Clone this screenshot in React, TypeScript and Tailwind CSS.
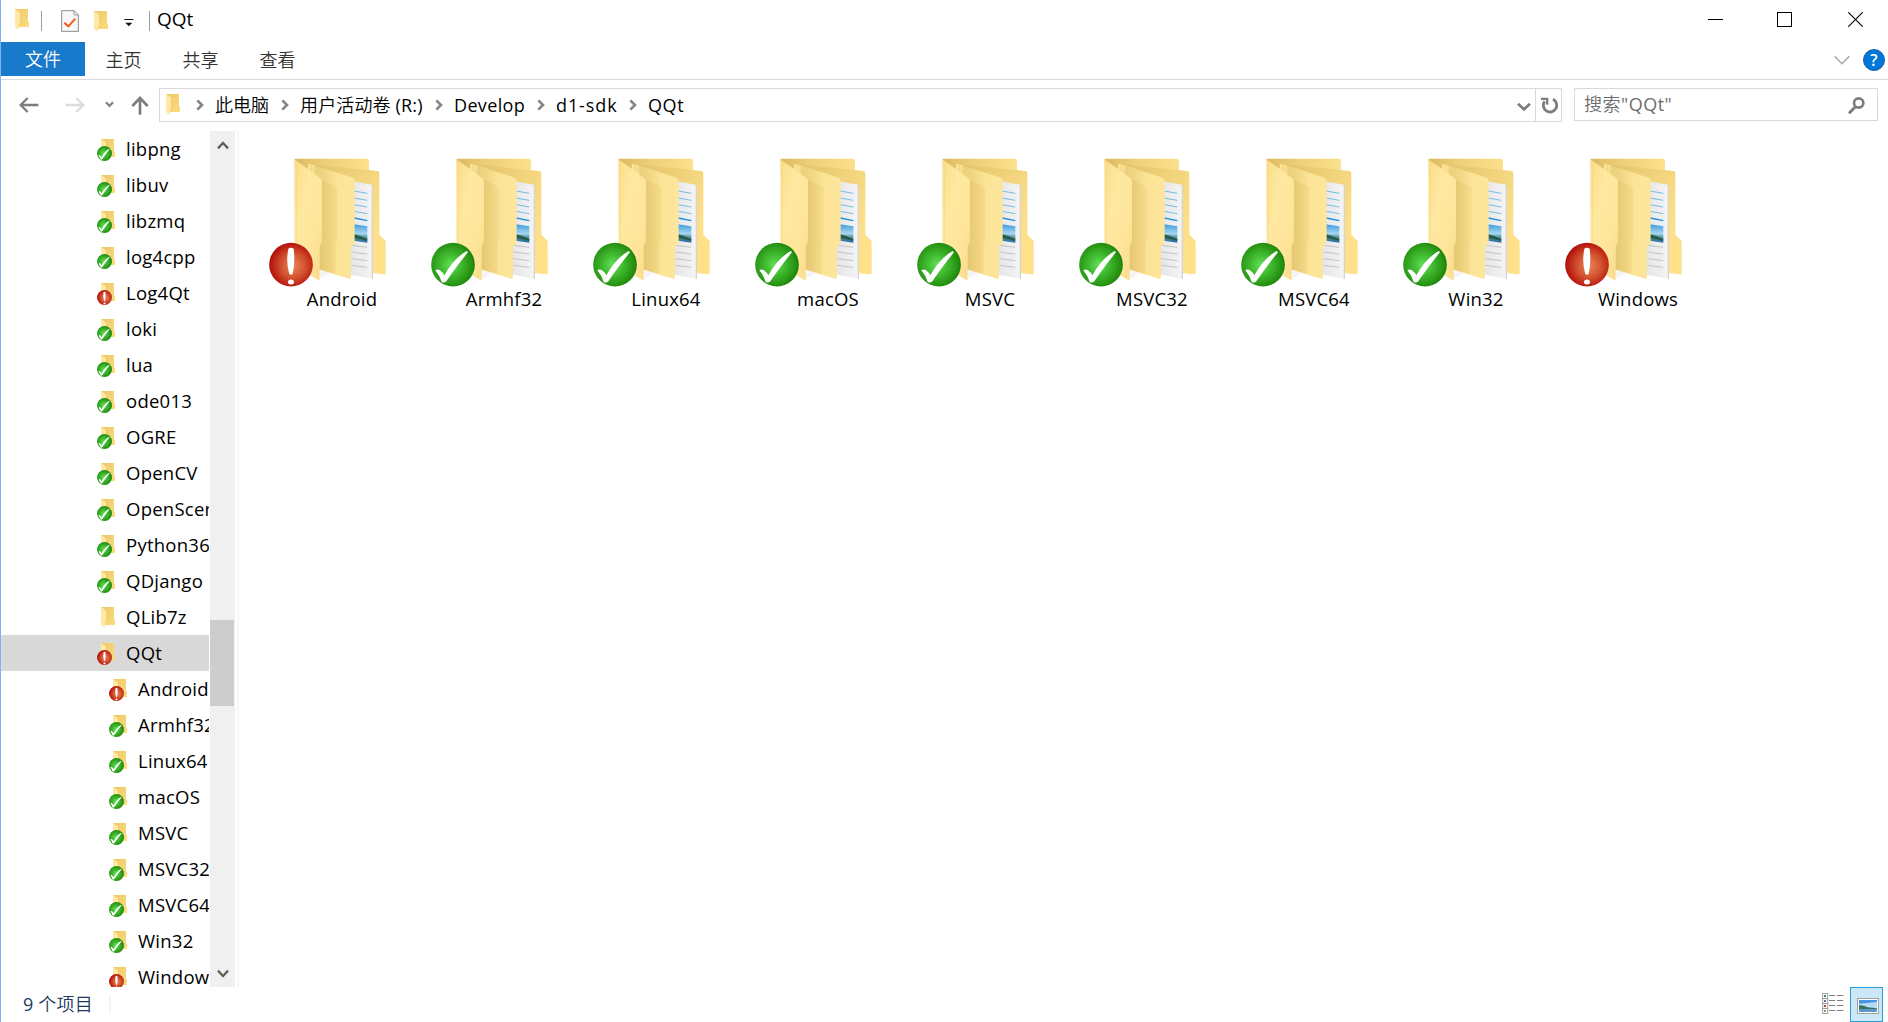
import React from 'react';

type Status = 'ok' | 'err' | 'none';

const tree: { name: string; status: Status; child?: boolean }[] = [
  { name: 'libpng', status: 'ok' },
  { name: 'libuv', status: 'ok' },
  { name: 'libzmq', status: 'ok' },
  { name: 'log4cpp', status: 'ok' },
  { name: 'Log4Qt', status: 'err' },
  { name: 'loki', status: 'ok' },
  { name: 'lua', status: 'ok' },
  { name: 'ode013', status: 'ok' },
  { name: 'OGRE', status: 'ok' },
  { name: 'OpenCV', status: 'ok' },
  { name: 'OpenScen', status: 'ok' },
  { name: 'Python36', status: 'ok' },
  { name: 'QDjango', status: 'ok' },
  { name: 'QLib7z', status: 'none' },
  { name: 'QQt', status: 'err' },
  { name: 'Android', status: 'err', child: true },
  { name: 'Armhf32', status: 'ok', child: true },
  { name: 'Linux64', status: 'ok', child: true },
  { name: 'macOS', status: 'ok', child: true },
  { name: 'MSVC', status: 'ok', child: true },
  { name: 'MSVC32', status: 'ok', child: true },
  { name: 'MSVC64', status: 'ok', child: true },
  { name: 'Win32', status: 'ok', child: true },
  { name: 'Window', status: 'err', child: true },
];

const folders: { name: string; status: Status }[] = [
  { name: 'Android', status: 'err' },
  { name: 'Armhf32', status: 'ok' },
  { name: 'Linux64', status: 'ok' },
  { name: 'macOS', status: 'ok' },
  { name: 'MSVC', status: 'ok' },
  { name: 'MSVC32', status: 'ok' },
  { name: 'MSVC64', status: 'ok' },
  { name: 'Win32', status: 'ok' },
  { name: 'Windows', status: 'err' },
];

function Gradients() {
  return (
    <svg className="absolute size-0" aria-hidden="true">
      <defs>
        <radialGradient id="green" cx="0.45" cy="0.5" r="0.55">
          <stop offset="0" stopColor="#62e058" />
          <stop offset="0.45" stopColor="#3fb82e" />
          <stop offset="0.9" stopColor="#248f10" />
          <stop offset="1" stopColor="#1a7c08" />
        </radialGradient>
        <radialGradient id="red" cx="0.55" cy="0.52" r="0.55">
          <stop offset="0" stopColor="#e8845a" />
          <stop offset="0.5" stopColor="#d2532f" />
          <stop offset="0.88" stopColor="#bb1c12" />
          <stop offset="1" stopColor="#a8120c" />
        </radialGradient>
        <linearGradient id="front" x1="0" y1="0" x2="1" y2="1">
          <stop offset="0" stopColor="#fadd88" />
          <stop offset="0.35" stopColor="#ffe8a0" />
          <stop offset="0.7" stopColor="#fee59a" />
          <stop offset="1" stopColor="#f8db88" />
        </linearGradient>
        <linearGradient id="middle" x1="0" y1="0" x2="1" y2="0">
          <stop offset="0" stopColor="#e6ca76" />
          <stop offset="0.3" stopColor="#eed380" />
          <stop offset="0.5" stopColor="#f6dc8c" />
          <stop offset="0.62" stopColor="#fce496" />
          <stop offset="1" stopColor="#fde59c" />
        </linearGradient>
        <linearGradient id="shade" x1="0" y1="0" x2="1" y2="0">
          <stop offset="0" stopColor="#c9a548" stopOpacity="0.22" />
          <stop offset="1" stopColor="#d9b659" stopOpacity="0.16" />
        </linearGradient>
        <linearGradient id="backTop" x1="0" y1="0" x2="1" y2="0.2">
          <stop offset="0" stopColor="#dcb860" />
          <stop offset="0.4" stopColor="#ebce78" />
          <stop offset="1" stopColor="#fde08a" />
        </linearGradient>
        <linearGradient id="backRight" x1="0" y1="0" x2="1" y2="0.8">
          <stop offset="0" stopColor="#e2c268" />
          <stop offset="0.5" stopColor="#f1d47c" />
          <stop offset="0.8" stopColor="#fcdf88" />
          <stop offset="1" stopColor="#ffe18a" />
        </linearGradient>
        <linearGradient id="paper" x1="0" y1="0" x2="1" y2="0">
          <stop offset="0" stopColor="#e3e3e5" />
          <stop offset="1" stopColor="#f5f5f6" />
        </linearGradient>
        <linearGradient id="sky" x1="0" y1="0" x2="0" y2="1">
          <stop offset="0" stopColor="#3f9fe0" />
          <stop offset="0.5" stopColor="#a6d4f0" />
          <stop offset="0.75" stopColor="#3f8a9a" />
          <stop offset="1" stopColor="#2a6ca8" />
        </linearGradient>
        <linearGradient id="smallBack" x1="0" y1="0" x2="1" y2="1">
          <stop offset="0" stopColor="#edc866" />
          <stop offset="1" stopColor="#fbdc80" />
        </linearGradient>
      </defs>
    </svg>
  );
}

/* Badge drawn on a 132-unit square */
function Badge({ status }: { status: Status }) {
  if (status === 'ok') {
    return (
      <g>
        <circle cx="66" cy="66" r="65.5" fill="url(#green)" />
        <path d="M13 83Q19 78 26 82Q36 89 40 98Q68 47 107 25L111 29Q80 66 46 116Q40 122 32 118Q26 98 13 83Z" fill="#fff" />
      </g>
    );
  }
  return (
    <g>
      <circle cx="66" cy="66" r="65.5" fill="url(#red)" />
      <path d="M58 18Q66 12 74 18Q79 58 71 94Q66 98 61 94Q50 58 58 18Z" fill="#fff" />
      <ellipse cx="66" cy="118" rx="9" ry="7.5" fill="#fff" />
    </g>
  );
}

function LargeFolder({ status }: { status: Status }) {
  return (
    <svg viewBox="54 48 360 396" className="block h-[132px] w-[120px] shrink-0">
      <path d="M133 60Q133 56 138 56H352Q357 58 357 63V130H240L133 62Z" fill="url(#backTop)" />
      <path d="M174 71L384 93Q388 95 388 100V284L407 303V399Q407 404 401 403L300 392Z" fill="url(#backRight)" />
      <path d="M300 122L369 135V417L290 402Z" fill="url(#paper)" />
      <path d="M369 135V417L365 416V134Z" fill="#d4d4d6" />
      <g stroke="#63b4e0" strokeWidth="2.6">
        <path d="M312 153L352 160M312 174L352 181M312 194L352 201M312 214L352 221" />
        <path d="M312 234L352 242" stroke="#1e90dc" strokeWidth="4" />
      </g>
      <path d="M312 253L352 259V308L312 302Z" fill="url(#sky)" />
      <path d="M312 283Q330 287 352 297V302L312 294Z" fill="#2a5a48" />
      <path d="M304 316L352 322M304 336L352 342M304 356L352 362M304 376L352 382" stroke="#b9b9bb" strokeWidth="2.4" />
      <path d="M204 390L240 398L212 416Z" fill="#f4f4f6" />
      <path d="M172 73Q176 69 182 72L308 113Q314 116 314 122V308L303 322V411Q303 418 297 416L204 388L205 130Z" fill="url(#middle)" />
      <path d="M212 116L258 140Q263 142 263 148V296L257 312V401L209 388Z" fill="url(#shade)" />
      <path d="M174 71L196 77V108L174 92Z" fill="#fbe294" />
      <path d="M184 76V98M193 79V106" stroke="#e6cb7a" strokeWidth="2" />
      <path d="M133 58L211 115Q216 119 216 124V306L209 318V418Q209 422 204 419L137 381Q133 378 133 373Z" fill="url(#front)" />
      <path d="M139 66V378" stroke="#f3d27e" strokeWidth="1.5" />
      <g transform="translate(57 308)">
        <Badge status={status} />
      </g>
    </svg>
  );
}

/* 18x22 closed folder; the badge sits over its lower left corner */
function SmallFolder({ status = 'none' }: { status?: Status }) {
  return (
    <svg viewBox="0 0 54 66" className="block h-[22px] w-[18px] shrink-0">
      <path d="M12 0H51V36L54 39V54H20Z" fill="url(#smallBack)" />
      <path d="M12 0L25 9Q27 10 27 13V42L24 45V63L13 55Q12 54 12 52Z" fill="#ffe8a6" />
      {status !== 'none' && (
        <g transform="translate(0 21) scale(0.341)">
          <Badge status={status} />
        </g>
      )}
    </svg>
  );
}

function Crumb({ label, className }: { label: string; className: string }) {
  return (
    <div className={`flex shrink-0 items-center ${className}`}>
      <svg viewBox="0 0 24 36" className="h-3 w-2 shrink-0">
        <path d="M4 4L18 18L4 32" fill="none" stroke="#858585" strokeWidth="8" />
      </svg>
      <span className="ml-[11px] whitespace-nowrap">{label}</span>
    </div>
  );
}

function TitleBar() {
  return (
    <header className="flex h-[42px] shrink-0 items-start">
      <div className="ml-[10px] mt-[9px]"><SmallFolder /></div>
      <div className="ml-[12px] mt-[11px] h-5 w-px bg-[#a0a0a0]" />
      <svg viewBox="0 0 54 66" className="ml-[19px] mt-[10px] h-[22px] w-[18px]">
        <path d="M2 2H39L52 15V64H2Z" fill="#f8f8fa" stroke="#8c8c8c" strokeWidth="3" />
        <path d="M39 2V15H52" fill="none" stroke="#8c8c8c" strokeWidth="2.5" />
        <path d="M10 38L22 49L43 26" fill="none" stroke="#f4591b" strokeWidth="6" />
      </svg>
      <div className="ml-[11px] mt-[11px]"><SmallFolder /></div>
      <svg viewBox="0 0 30 30" className="ml-[16px] mt-[18px] h-[10px] w-[10px]">
        <path d="M1 4.500H28" stroke="#111" strokeWidth="3" />
        <path d="M4 14H25L14.500 25Z" fill="#111" />
      </svg>
      <div className="ml-[15px] mt-[11px] h-5 w-px bg-[#a0a0a0]" />
      <span className="ml-[7px] mt-[6px] text-[19px] leading-[26px]">QQt</span>
      <div className="ml-auto mr-[25px] mt-[12px] flex items-center gap-[54px]">
        <svg viewBox="0 0 15 15" className="size-[15px]"><path d="M0 7.500H15" stroke="#000" /></svg>
        <svg viewBox="0 0 15 15" className="size-[15px]"><rect x="0.500" y="0.500" width="14" height="14" fill="none" stroke="#000" /></svg>
        <svg viewBox="0 0 15 15" className="ml-[2px] size-[15px]"><path d="M0.300 0.300L14.700 14.700M14.700 0.300L0.300 14.700" stroke="#000" strokeWidth="1.100" /></svg>
      </div>
    </header>
  );
}

function Tabs() {
  return (
    <nav className="flex h-[38px] shrink-0 border-b border-[#dadbdc] text-[#333]">
      <div className="flex h-[34px] w-[84px] items-center justify-center bg-[#1979ca] text-white">文件</div>
      <div className="flex h-[36px] w-[77px] items-center justify-center">主页</div>
      <div className="flex h-[36px] w-[77px] items-center justify-center">共享</div>
      <div className="flex h-[36px] w-[77px] items-center justify-center">查看</div>
      <svg viewBox="0 0 48 30" className="ml-auto mt-[13px] h-[10px] w-4"><path d="M2 4L24 26L46 4" fill="none" stroke="#a6a6a6" strokeWidth="4.500" /></svg>
      <div className="ml-[13px] mr-[3px] mt-[7px] flex size-[22px] items-center justify-center rounded-full border border-[#1a5fa8] bg-[#0078d7] text-[16px] font-semibold leading-none text-white">?</div>
    </nav>
  );
}

function AddressBar() {
  return (
    <div className="flex h-[51px] shrink-0 items-start pt-2">
      <svg viewBox="0 0 60 48" className="ml-[18px] mt-[9px] h-4 w-5"><path d="M58 24H6M26 3L5 24L26 45" fill="none" stroke="#7d7d7d" strokeWidth="7" /></svg>
      <svg viewBox="0 0 60 48" className="ml-[26px] mt-[9px] h-4 w-5"><path d="M2 24H54M34 3L55 24L34 45" fill="none" stroke="#dcdcdc" strokeWidth="7" /></svg>
      <svg viewBox="0 0 27 21" className="ml-[20px] mt-[13px] h-[7px] w-[9px]"><path d="M3 4L13.500 15L24 4" fill="none" stroke="#7d7d7d" strokeWidth="6.500" /></svg>
      <svg viewBox="0 0 54 57" className="ml-[17px] mt-[8px] h-[19px] w-[18px]"><path d="M27 56V6M4 30L27 6L50 30" fill="none" stroke="#7d7d7d" strokeWidth="8" /></svg>
      <div className="ml-[10px] flex h-[34px] w-[1403px] border border-[#d9d9d9]">
        <div className="ml-[2px] mt-[5px]"><SmallFolder /></div>
        <div className="flex h-[32px]">
          <Crumb label="此电脑" className="ml-[16px] w-[85px]" />
          <Crumb label="用户活动卷 (R:)" className="w-[154px] tracking-[0.15px]" />
          <Crumb label="Develop" className="w-[102px] tracking-[0.35px]" />
          <Crumb label="d1-sdk" className="w-[92px] tracking-[0.9px]" />
          <Crumb label="QQt" className="w-[70px] tracking-[0.6px]" />
        </div>
        <svg viewBox="0 0 42 30" className="ml-auto mr-[4px] mt-[13px] h-[10px] w-[14px]"><path d="M3 5L21 22L39 5" fill="none" stroke="#7d7d7d" strokeWidth="8" /></svg>
        <div className="flex w-[26px] border-l border-[#d9d9d9]">
          <svg viewBox="0 0 51 51" className="ml-[5px] mt-[8px] size-[17px]">
            <path d="M36 7A20 20 0 1 1 11 13" fill="none" stroke="#7d7d7d" strokeWidth="8.500" />
            <path d="M0 2H22V23H15V9H0Z" fill="#7d7d7d" />
          </svg>
        </div>
      </div>
      <div className="ml-[12px] flex h-[33px] w-[304px] border border-[#d9d9d9] text-[#6d6d6d]">
        <span className="ml-[9px] mt-[1px] leading-[28px] tracking-[0.5px]">搜索"QQt"</span>
        <svg viewBox="0 0 51 54" className="ml-auto mr-[12px] mt-[8px] h-[18px] w-[17px]">
          <circle cx="32" cy="18" r="14" fill="none" stroke="#7d7d7d" strokeWidth="8" />
          <path d="M22 29L3 49" stroke="#7d7d7d" strokeWidth="9" />
        </svg>
      </div>
    </div>
  );
}

function Sidebar() {
  return (
    <aside className="flex w-[238px] shrink-0">
      <div className="h-[856px] w-[208px] overflow-hidden">
        {tree.map((n) => (
          <div key={`${n.child ? 'c' : 'p'}-${n.name}`} className={`flex h-9 ${n.child ? 'pl-[108px]' : 'pl-[96px]'} ${n.name === 'QQt' ? 'bg-[#d9d9d9]' : ''}`}>
            <div className="mt-[8px]"><SmallFolder status={n.status} /></div>
            <span className="ml-[11px] whitespace-nowrap text-[18.5px] leading-[35px] tracking-[0.25px]">{n.name}</span>
          </div>
        ))}
      </div>
      <div className="ml-px flex h-[856px] w-[25px] flex-col bg-[#f0f0f0]">
        <svg viewBox="0 0 36 30" className="ml-[6.500px] mt-[9px] h-[10px] w-3"><path d="M3 25L18 9L33 25" fill="none" stroke="#606060" strokeWidth="7" /></svg>
        <div className="mt-[470px] h-[86px] w-6 bg-[#cdcdcd]" />
        <svg viewBox="0 0 36 30" className="mb-[8px] ml-[6.500px] mt-auto h-[10px] w-3"><path d="M3 5L18 21L33 5" fill="none" stroke="#606060" strokeWidth="7" /></svg>
      </div>
      <div className="ml-[2px] h-[856px] w-[2px] bg-[#f7f7f7]" />
    </aside>
  );
}

function StatusBar() {
  return (
    <footer className="flex h-[35px] shrink-0 items-start text-[#1e395b]">
      <span className="ml-[22px] mt-[4px] leading-[26px] tracking-[0.2px]">9 个项目</span>
      <div className="ml-[16px] mt-[9px] h-[17px] w-[2px] bg-[#f3f3f3]" />
      <svg viewBox="0 0 66 63" className="ml-auto mr-[6px] mt-[6px] h-[21px] w-[22px]">
        <g fill="#fff" stroke="#a0a0a0" strokeWidth="3">
          <rect x="2" y="1.500" width="15" height="15" /><rect x="2" y="16.500" width="15" height="15" />
          <rect x="2" y="31.500" width="15" height="15" /><rect x="2" y="46.500" width="15" height="15" />
        </g>
        <rect x="6" y="6" width="6" height="6" fill="#3d7d86" /><rect x="6" y="21" width="6" height="6" fill="#5472a0" />
        <rect x="6" y="36" width="6" height="6" fill="#b8442c" /><rect x="6" y="51" width="6" height="6" fill="#7da860" />
        <path d="M21 7.500H40M45 7.500H64M21 22.500H40M45 22.500H64M21 37.500H40M45 37.500H64M21 52.500H40M45 52.500H64" stroke="#808080" strokeWidth="3" />
      </svg>
      <div className="mr-[5px] flex h-[35px] w-[33px] border border-[#26a0da] bg-[#cce8f6]">
        <svg viewBox="0 0 66 48" className="ml-[6px] mt-[10px] h-4 w-[22px]">
          <rect x="1.500" y="1.500" width="63" height="45" fill="#fff" stroke="#a0a0a0" strokeWidth="3" />
          <rect x="6" y="6" width="54" height="36" fill="#b4dcf8" />
          <path d="M6 6H60V12L36 14L6 17Z" fill="#4a94e4" />
          <path d="M6 22Q18 21 32 28L60 31V34H6Z" fill="#3d7060" />
          <path d="M6 33H60V42H6Z" fill="#5a9cc8" />
        </svg>
      </div>
    </footer>
  );
}

export default function App() {
  return (
    <div className="relative flex h-[1022px] w-[1888px] flex-col overflow-hidden border-l border-[#7fb4f5] bg-white font-['Open_Sans','Noto_Sans_CJK_SC_DemiLight','Noto_Sans_CJK_SC',sans-serif] text-[18px] text-black">
      <Gradients />
      <TitleBar />
      <Tabs />
      <AddressBar />
      <main className="flex h-[856px] shrink-0">
        <Sidebar />
        <section className="flex pl-[20px] pt-[25px]">
          {folders.map((f) => (
            <div key={f.name} className="flex w-[162px] flex-col">
              <div className="ml-[9px]"><LargeFolder status={f.status} /></div>
              <span className="ml-[4px] mt-[-2px] text-center text-[18.5px] leading-[26px] tracking-[0.2px]">{f.name}</span>
            </div>
          ))}
        </section>
      </main>
      <StatusBar />
    </div>
  );
}
